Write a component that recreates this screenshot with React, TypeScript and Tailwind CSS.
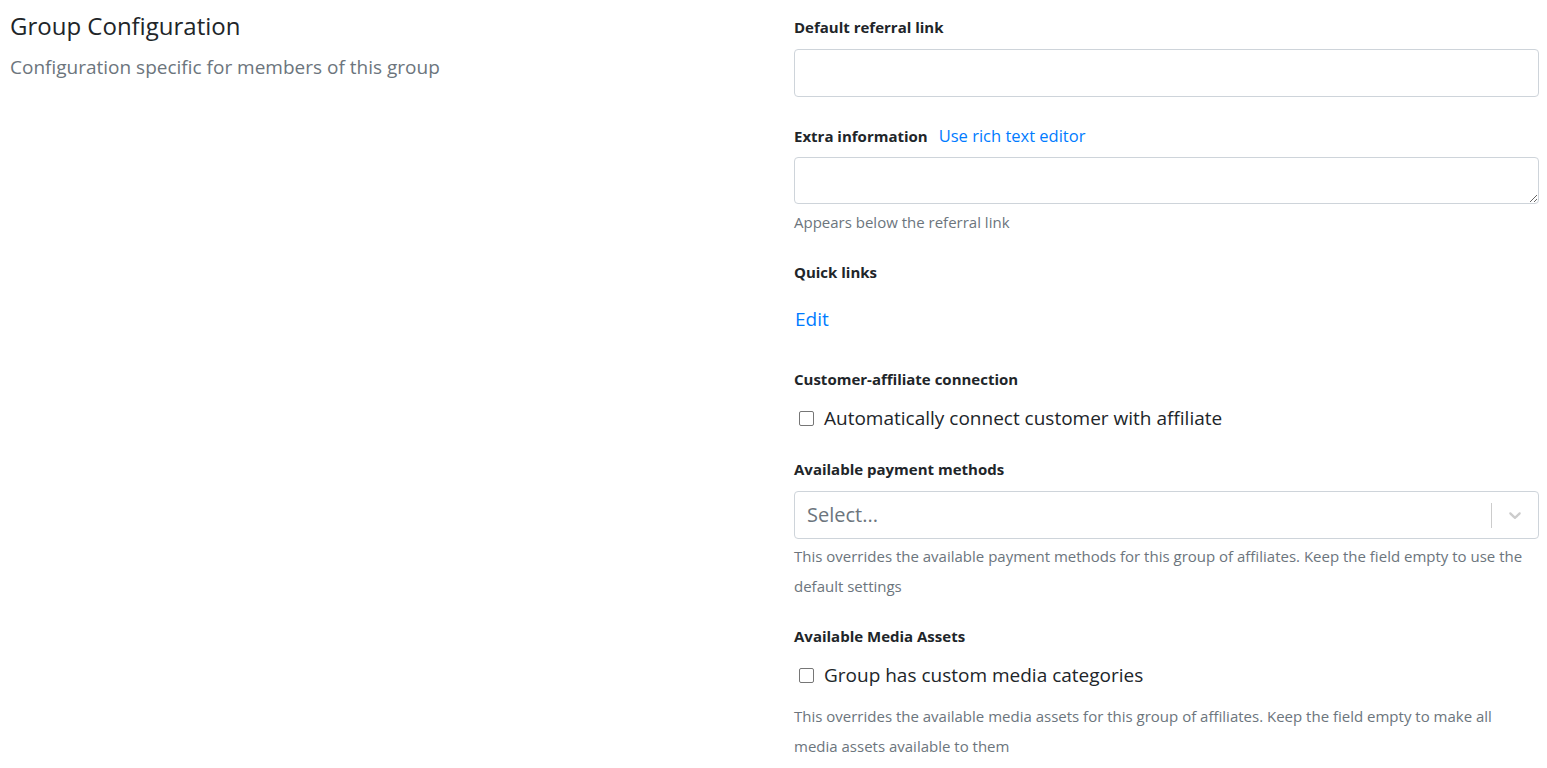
import React from "react";

const font = { fontFamily: '"Open Sans", "Noto Sans", sans-serif' };

function Label({ children }: { children: React.ReactNode }) {
  return <div className="text-[15px] font-bold leading-[20px] text-[#212529]">{children}</div>;
}

function Help({ children }: { children: React.ReactNode }) {
  return <div className="text-[15px] leading-[30px] text-[#6c757d]">{children}</div>;
}

function Checkbox({ label }: { label: string }) {
  return (
    <label className="flex items-center gap-[10px] pl-[5px]">
      <span className="h-[15px] w-[15px] rounded-[2px] border border-[#767676] bg-white" />
      <span className="text-[19px] leading-[26px] text-[#212529]">{label}</span>
    </label>
  );
}

export default function App() {
  return (
    <div className="flex min-h-screen bg-white" style={font}>
      <div className="flex-1 pl-[10px] pt-[10px]">
        <h4 className="text-[24px] leading-[32px] text-[#212529]">Group Configuration</h4>
        <p className="mt-[11px] text-[19px] leading-[28px] text-[#6c757d]">
          Configuration specific for members of this group
        </p>
      </div>

      <div className="mr-[8px] w-[745px] pt-[17px]">
        <Label>Default referral link</Label>
        <input className="mt-[12px] block h-[48px] w-full rounded-[4px] border border-[#ced4da] px-3 outline-none" />

        <div className="mt-[28px] flex items-center gap-[11px]">
          <Label>Extra information</Label>
          <a className="text-[16.5px] leading-[22px] text-[#007bff]">Use rich text editor</a>
        </div>
        <textarea className="mt-[10px] block h-[47px] w-full rounded-[4px] border border-[#ced4da] px-3 outline-none" />
        <div className="mt-[3px]">
          <Help>Appears below the referral link</Help>
        </div>

        <div className="mt-[25px]">
          <Label>Quick links</Label>
        </div>
        <div className="mt-[24px]">
          <a className="pl-[1px] text-[19px] leading-[26px] text-[#007bff]">Edit</a>
        </div>

        <div className="mt-[37px]">
          <Label>Customer-affiliate connection</Label>
        </div>
        <div className="mt-[16px]">
          <Checkbox label="Automatically connect customer with affiliate" />
        </div>

        <div className="mt-[28px]">
          <Label>Available payment methods</Label>
        </div>
        <div className="mt-[12px] flex h-[48px] items-center rounded-[4px] border border-[#ced4da] bg-white">
          <span className="flex-1 pl-[12px] text-[20px] text-[#6c757d]">Select...</span>
          <span className="h-[25px] w-px bg-[#ccc]" />
          <span className="flex w-[46px] justify-center">
            <svg width="20" height="20" viewBox="0 0 20 20" fill="#ccc">
              <path d="M4.516 7.548c0.436-0.446 1.043-0.481 1.576 0l3.908 3.747 3.908-3.747c0.533-0.481 1.141-0.446 1.574 0 0.436 0.445 0.408 1.197 0 1.615-0.406 0.418-4.695 4.502-4.695 4.502-0.217 0.223-0.502 0.335-0.787 0.335s-0.57-0.112-0.789-0.335c0 0-4.287-4.084-4.695-4.502s-0.436-1.17 0-1.615z" />
            </svg>
          </span>
        </div>
        <div className="mt-[2px]">
          <Help>
            This overrides the available payment methods for this group of affiliates. Keep the field empty to use the default settings
          </Help>
        </div>

        <div className="mt-[25px]">
          <Label>Available Media Assets</Label>
        </div>
        <div className="mt-[16px]">
          <Checkbox label="Group has custom media categories" />
        </div>
        <div className="mt-[13px]">
          <Help>
            This overrides the available media assets for this group of affiliates. Keep the field empty to make all media assets available to them
          </Help>
        </div>
      </div>
    </div>
  );
}
